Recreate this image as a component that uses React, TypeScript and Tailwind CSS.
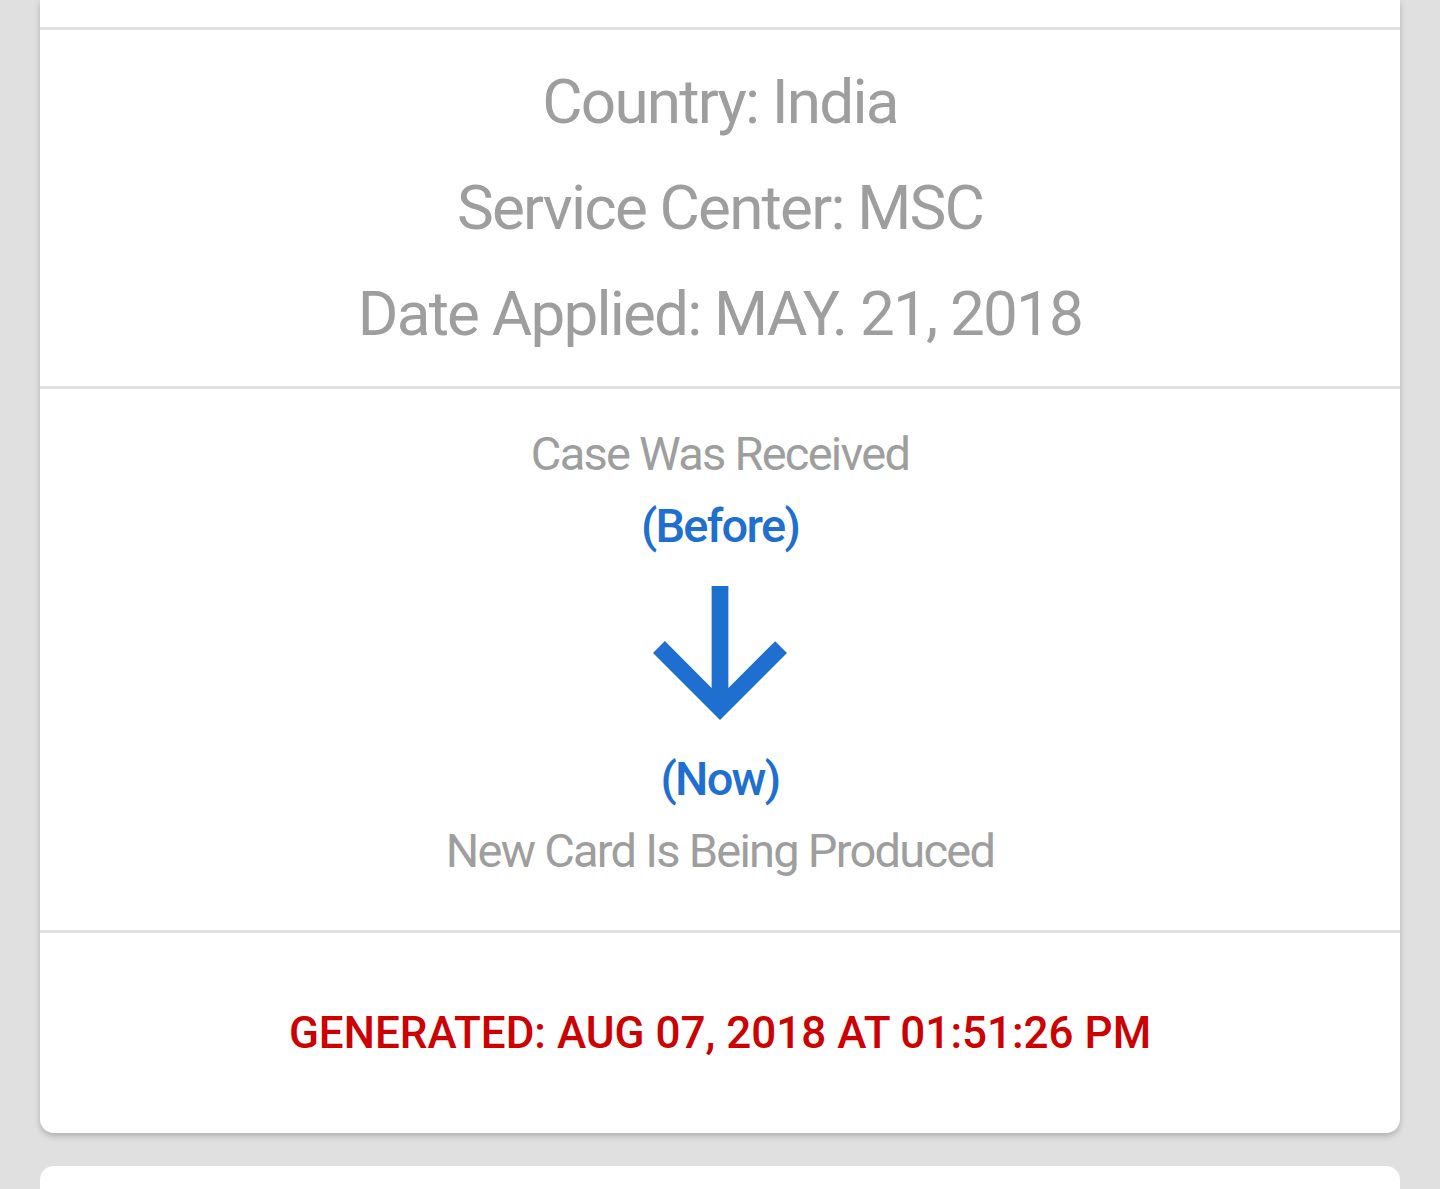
import React from "react";

interface InfoLine {
  label: string;
  value: string;
}

const infoLines: InfoLine[] = [
  { label: "Country", value: "India" },
  { label: "Service Center", value: "MSC" },
  { label: "Date Applied", value: "MAY. 21, 2018" },
];

const Divider = () => <div className="h-[3px] bg-[#e0e0e0]" />;

// material style "arrow downward", cropped to the arrow itself
const ArrowDown = () => (
  <svg viewBox="4 4 16 16" className="w-[134px] h-[134px]" fill="#1f6fd0">
    <path d="M20 12l-1.41-1.41L13 16.17V4h-2v12.17l-5.58-5.59L4 12l8 8 8-8z" />
  </svg>
);

export default function App() {
  return (
    <div className="min-h-[1189px] bg-[#e0e0e0] px-10 font-[Roboto,sans-serif] overflow-hidden">
      <div className="bg-white rounded-b-[14px] shadow-[0_3px_6px_rgba(0,0,0,0.22)]">
        {/* tail of the section above */}
        <div className="h-[27px]" />
        <Divider />

        {/* Case details */}
        <div className="py-[19px] flex flex-col items-center text-[#9e9e9e] text-[62px] leading-[106px] tracking-[-1.8px]">
          {infoLines.map((line) => (
            <div key={line.label}>
              {line.label}: {line.value}
            </div>
          ))}
        </div>
        <Divider />

        {/* Status change */}
        <div className="pt-[29px] pb-[43px] flex flex-col items-center text-[47px] leading-[72px] tracking-[-1.75px]">
          <div className="text-[#9e9e9e]">Case Was Received</div>
          <div className="text-[#1f6fd0] font-medium">(Before)</div>
          <div className="mt-6">
            <ArrowDown />
          </div>
          <div className="mt-[23px] text-[#1f6fd0] font-medium">(Now)</div>
          <div className="text-[#9e9e9e]">New Card Is Being Produced</div>
        </div>
        <Divider />

        {/* Timestamp */}
        <div className="h-[200px] flex items-center justify-center">
          <span className="text-[#cc0000] text-[44px] font-medium">
            GENERATED: AUG 07, 2018 AT 01:51:26 PM
          </span>
        </div>
      </div>

      {/* next card */}
      <div className="mt-[33px] h-[60px] bg-white rounded-t-[14px]" />
    </div>
  );
}
